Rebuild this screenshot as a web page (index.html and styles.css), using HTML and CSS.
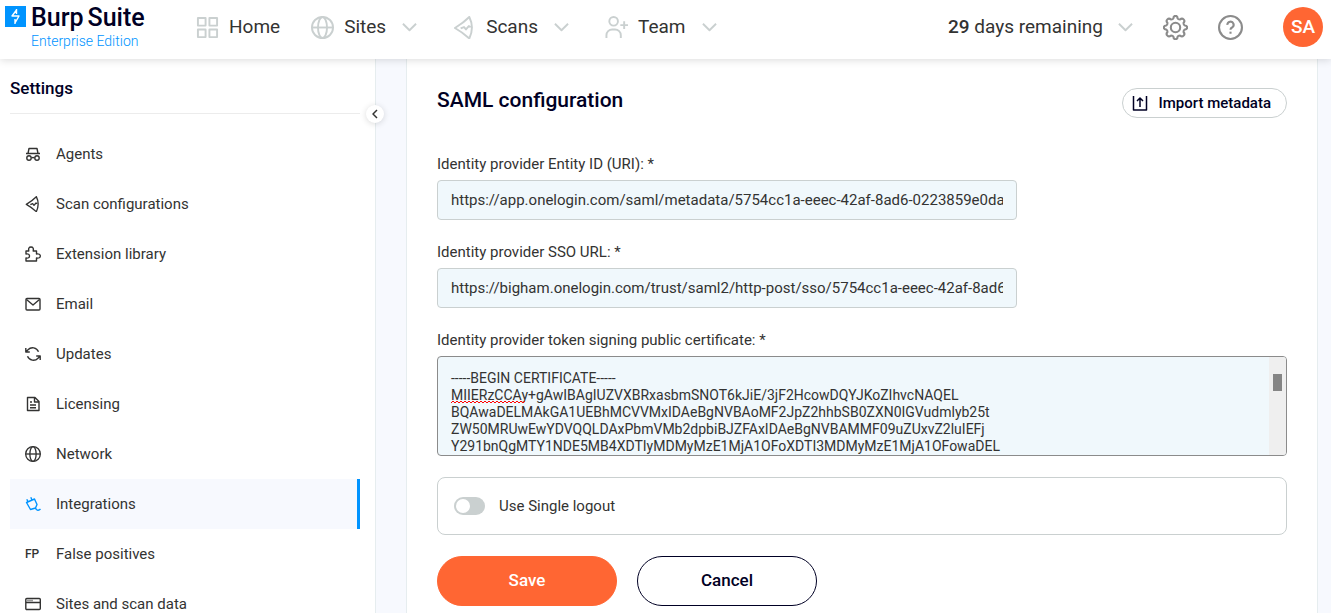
FILE: index.html
```html
<!DOCTYPE html>
<html lang="en">
<head>
    <meta charset="UTF-8">
    <meta name="viewport" content="width=device-width, initial-scale=1.0">
    <title>Settings - Burp Suite Enterprise Edition</title>
    <link rel="stylesheet" href="styles.css">
</head>
<body>
    <!-- shared icon shapes -->
    <svg class="sprite" aria-hidden="true">
        <symbol id="chevron" viewBox="0 0 16 10"><path d="M1 1.5l7 7 7-7"/></symbol>
        <symbol id="globe" viewBox="0 0 24 24"><circle cx="12" cy="12" r="11"/><ellipse cx="12" cy="12" rx="4.7" ry="11"/><path d="M1 12h22"/></symbol>
        <symbol id="scan" viewBox="0 0 24 24"><path d="M17 1Q11 7 2 12.500 10 17 17 23.500Q22.500 12 17 1z"/><path d="M8 13l3.500-1.500L13.500 14l3-3.500 2 1"/></symbol>
    </svg>

    <header class="topbar">
        <a class="logo" href="#">
            <svg class="logo-mark" viewBox="0 0 21 21" aria-hidden="true">
                <rect width="21" height="21" fill="#0094ff"/>
                <path d="M11.500 3v5M11.500 4L7 10h7l-4 7M10 13v5" fill="none" stroke="#fff" stroke-width="1.400"/>
            </svg>
            <span class="logo-name"><span>Burp</span><span>Suite</span></span>
            <span class="logo-edition">Enterprise Edition</span>
        </a>
        <nav class="main-nav">
            <a href="#">
                <svg class="nav-icon" viewBox="0 0 24 24"><path d="M2 2h8v8H2zM14 2h8v8h-8zM2 14h8v8H2zM14 14h8v8h-8z"/></svg>
                Home
            </a>
            <a href="#">
                <svg class="nav-icon"><use href="#globe"/></svg>
                Sites
                <svg class="chevron"><use href="#chevron"/></svg>
            </a>
            <a href="#">
                <svg class="nav-icon"><use href="#scan"/></svg>
                Scans
                <svg class="chevron"><use href="#chevron"/></svg>
            </a>
            <a href="#">
                <svg class="nav-icon" viewBox="0 0 24 24"><circle cx="9" cy="5.500" r="4.500"/><path d="M1.500 23v-3a6 6 0 0 1 6-6h3a6 6 0 0 1 6 6v3M16 9.500h8M20 5.500v8"/></svg>
                Team
                <svg class="chevron"><use href="#chevron"/></svg>
            </a>
        </nav>
        <div class="account">
            <button class="licence" type="button">
                <span><b>29</b> days remaining</span>
                <svg class="chevron"><use href="#chevron"/></svg>
            </button>
            <button class="icon-button" type="button" aria-label="Settings">
                <svg viewBox="0 0 24 24"><circle cx="12" cy="12" r="4.500"/><path d="M10 3.200Q10 .8 12 .8T14 3.200Q14.500 4.300 16.300 4.300Q18.200 2.600 19.800 4.200T19.700 7.700Q19.700 9.400 20.800 10Q23.200 10 23.200 12T20.800 14Q19.700 14.600 19.700 16.300Q21.400 18.200 19.800 19.800T16.300 19.700Q14.500 19.700 14 20.800Q14 23.200 12 23.200T10 20.800Q9.500 19.700 7.700 19.700Q5.800 21.400 4.200 19.800T4.300 16.300Q4.300 14.600 3.200 14Q.8 14 .8 12T3.200 10Q4.300 9.400 4.300 7.700Q2.600 5.800 4.200 4.200T7.700 4.300Q9.500 4.300 10 3.200z"/></svg>
            </button>
            <button class="icon-button" type="button" aria-label="Help">
                <svg viewBox="0 0 24 24"><circle cx="12" cy="12" r="11"/><path d="M9 9.500a3 3 0 1 1 4.500 2.500Q12 12.800 12 14.200"/><path d="M12 16v2"/></svg>
            </button>
            <button class="avatar" type="button">SA</button>
        </div>
    </header>

    <div class="page">
        <div class="sidebar-wrap">
            <aside class="sidebar">
                <h2>Settings</h2>
                <nav class="side-nav">
                    <a href="#">
                        <svg viewBox="0 0 16 16"><path d="M1 7.500h14M3 7.500L4 2.500h8l1 5M6.500 12q1.500-1 3 0"/><circle cx="4" cy="12" r="2.200"/><circle cx="12" cy="12" r="2.200"/></svg>
                        Agents
                    </a>
                    <a href="#">
                        <svg viewBox="0 0 24 24" class="thick"><use href="#scan"/></svg>
                        Scan configurations
                    </a>
                    <a href="#">
                        <svg viewBox="0 0 16 16"><path d="M1 5h2.800Q3 1 6 1t2.200 4H11.500v3Q15.300 7.500 15.300 10t-3.800 2V15H1v-3Q4.500 12.500 4.500 10T1 8z"/></svg>
                        Extension library
                    </a>
                    <a href="#">
                        <svg viewBox="0 0 16 16"><rect x="1" y="2.500" width="14" height="11.500" rx="1"/><path d="M1.500 3.500L8 9l6.500-5.500"/></svg>
                        Email
                    </a>
                    <a href="#">
                        <svg viewBox="0 0 16 16"><path d="M.8 2v4h4M1 5.800l2-2a6.300 6.300 0 0 1 10.500 1.900M15.200 14v-4h-4M15 10.200l-2 2a6.300 6.300 0 0 1-10.500-1.900"/></svg>
                        Updates
                    </a>
                    <a href="#">
                        <svg viewBox="0 0 16 16"><path d="M2.500 1.500H10l4 4v9H2.500zM9.500 1.500V6H14M5 6h2M5 9h6M5 11.800h6"/></svg>
                        Licensing
                    </a>
                    <a href="#">
                        <svg viewBox="0 0 24 24" class="thick"><use href="#globe"/></svg>
                        Network
                    </a>
                    <a href="#" class="active" aria-current="page">
                        <svg viewBox="0 0 16 16"><path d="M1.500 6.500L9.500 3 12 8.500l-1.500 3.500-5 1.500zM3 5.800L1.800 3.200M7 4L5.800 1.200M10.500 12q.8 2.500 2.500 2.300 1.500-.1 2.500-1.300"/></svg>
                        Integrations
                    </a>
                    <a href="#">
                        <span class="fp" aria-hidden="true">FP</span>
                        False positives
                    </a>
                    <a href="#">
                        <svg viewBox="0 0 16 16"><rect x=".8" y="2.500" width="14.500" height="11" rx="1"/><path d="M1 6.500h14M2.500 4.500h1M4.500 4.500h1M6.500 4.500h1"/></svg>
                        Sites and scan data
                    </a>
                </nav>
            </aside>
            <button class="collapse" type="button" aria-label="Collapse sidebar">
                <svg viewBox="0 0 10 10"><path d="M7 1L3 5l4 4"/></svg>
            </button>
        </div>

        <main class="content">
            <form class="card">
                <div class="card-head">
                    <h1>SAML configuration</h1>
                    <button class="import" type="button">
                        <svg viewBox="0 0 16 16"><path d="M1.500 1v14h13V1M8 12V3M5 6l3-3 3 3"/></svg>
                        Import metadata
                    </button>
                </div>

                <label for="entity-id">Identity provider Entity ID (URI): *</label>
                <input class="text-field" id="entity-id" type="text" value="https://app.onelogin.com/saml/metadata/5754cc1a-eeec-42af-8ad6-0223859e0da">

                <label for="sso-url">Identity provider SSO URL: *</label>
                <input class="text-field" id="sso-url" type="text" value="https://bigham.onelogin.com/trust/saml2/http-post/sso/5754cc1a-eeec-42af-8ad6">

                <label for="certificate">Identity provider token signing public certificate: *</label>
                <div class="certificate">
                    <textarea id="certificate" spellcheck="false">-----BEGIN CERTIFICATE-----
MIIERzCCAy+gAwIBAgIUZVXBRxasbmSNOT6kJiE/3jF2HcowDQYJKoZIhvcNAQEL
BQAwaDELMAkGA1UEBhMCVVMxIDAeBgNVBAoMF2JpZ2hhbSB0ZXN0IGVudmlyb25t
ZW50MRUwEwYDVQQLDAxPbmVMb2dpbiBJZFAxIDAeBgNVBAMMF09uZUxvZ2luIEFj
Y291bnQgMTY1NDE5MB4XDTIyMDMyMzE1MjA1OFoXDTI3MDMyMzE1MjA1OFowaDEL</textarea>
                    <svg class="squiggle" viewBox="0 0 78 4" aria-hidden="true"><path d="M0 3l2-2 2 2 2-2 2 2 2-2 2 2 2-2 2 2 2-2 2 2 2-2 2 2 2-2 2 2 2-2 2 2 2-2 2 2 2-2 2 2 2-2 2 2 2-2 2 2 2-2 2 2 2-2 2 2 2-2 2 2 2-2 2 2 2-2 2 2 2-2 2 2 2-2"/></svg>
                    <div class="scrollbar"><span class="thumb"></span></div>
                </div>

                <div class="option">
                    <input class="switch" id="single-logout" type="checkbox" role="switch">
                    <label for="single-logout">Use Single logout</label>
                </div>

                <div class="actions">
                    <button class="btn btn-primary" type="submit">Save</button>
                    <button class="btn" type="button">Cancel</button>
                </div>
            </form>
        </main>
    </div>
</body>
</html>
```
FILE: styles.css
```css
* {
    box-sizing: border-box;
}
body {
    margin: 0;
    height: 100vh;
    display: flex;
    flex-direction: column;
    overflow: hidden;
    font-family: Roboto, "Liberation Sans", Arial, sans-serif;
    font-size: 15px;
    line-height: 20px;
    color: #333332;
    background-color: #f7f9fe;
}
a {
    color: inherit;
    text-decoration: none;
}
button {
    font: inherit;
    color: inherit;
    background: none;
    border: 0;
    padding: 0;
    cursor: pointer;
}
svg {
    display: block;
    flex-shrink: 0;
    fill: none;
    stroke: currentColor;
    stroke-linejoin: round;
}
.sprite {
    position: absolute;
    width: 0;
    height: 0;
}

/* Top bar */
.topbar {
    position: relative;
    z-index: 1;
    flex-shrink: 0;
    display: flex;
    align-items: center;
    height: 59px;
    padding: 0 8px 5px 5px;
    background-color: #fff;
    box-shadow: 0 1px 8px rgba(0, 0, 0, 0.15);
    font-size: 19px;
}
.logo {
    display: grid;
    grid-template-columns: 21px auto;
    column-gap: 5px;
    width: 191px;
    padding-top: 3px;
}
.logo-mark {
    width: 21px;
    height: 21px;
    stroke: none;
}
.logo-name {
    display: flex;
    gap: 4px;
    font-size: 25px;
    font-weight: 500;
    line-height: 24px;
    color: #000024;
}
.logo-edition {
    grid-column: 2;
    font-size: 14px;
    font-weight: 300;
    line-height: 22px;
    color: #0094ff;
}
.main-nav {
    display: flex;
    gap: 31px;
}
.main-nav a {
    display: flex;
    align-items: center;
    gap: 10px;
}
.nav-icon {
    width: 23px;
    height: 23px;
    color: #cad0d0;
    stroke-width: 2;
}
.chevron {
    width: 15px;
    height: 10px;
    margin: 0 5px 0 6px;
    color: #cad0d0;
    stroke-width: 2;
}
.account {
    display: flex;
    align-items: center;
    margin-left: auto;
}
.licence {
    display: flex;
    align-items: center;
    gap: 9px;
}
.licence b {
    font-weight: 500;
}
.icon-button {
    margin-left: 30px;
    color: #8b8b8b;
}
.licence + .icon-button {
    margin-left: 25px;
}
.icon-button svg {
    width: 25px;
    height: 25px;
    stroke-width: 2;
}
.avatar {
    width: 40px;
    height: 40px;
    margin-left: 40px;
    border-radius: 50%;
    background-color: #ff6633;
    color: #fff;
    font-size: 19px;
    font-weight: 500;
}

/* Sidebar */
.page {
    flex: 1;
    min-height: 0;
    display: flex;
}
.sidebar-wrap {
    position: relative;
    flex: 0 0 376px;
    display: flex;
}
.sidebar {
    flex: 1;
    overflow: hidden;
    padding: 0 15px 0 10px;
    background-color: #fff;
    border-right: 1px solid #e6edef;
}
.sidebar h2 {
    margin: 0 0 15px;
    padding: 19px 0 14px;
    border-bottom: 1px solid #ececec;
    font-size: 17px;
    font-weight: 500;
    line-height: 21px;
    color: #000024;
}
.side-nav a {
    display: flex;
    align-items: center;
    gap: 15px;
    height: 50px;
    padding-left: 15px;
}
.side-nav svg {
    width: 16px;
    height: 16px;
    stroke-width: 1.4;
}
.side-nav svg.thick {
    stroke-width: 2;
}
.side-nav .active {
    background-color: #f7f9fe;
    border-right: 3px solid #0094ff;
}
.side-nav .active svg {
    color: #0094ff;
}
.fp {
    width: 16px;
    font-size: 12px;
    font-weight: 500;
}
.collapse {
    position: absolute;
    top: 46px;
    right: -8px;
    display: flex;
    align-items: center;
    justify-content: center;
    width: 18px;
    height: 18px;
    border-radius: 50%;
    background-color: #fff;
    box-shadow: 0 1px 6px rgba(0, 0, 0, 0.15);
}
.collapse svg {
    width: 10px;
    height: 10px;
    stroke-width: 1.5;
}

/* SAML form */
.content {
    flex: 1;
    min-width: 0;
    padding: 0 13px 0 30px;
}
.card {
    height: 100%;
    overflow: hidden;
    padding: 28px 30px 0;
    background-color: #fff;
    border: solid #e6edef;
    border-width: 0 1px;
}
.card-head {
    display: flex;
    align-items: flex-start;
    justify-content: space-between;
    margin-bottom: 36px;
}
.card-head h1 {
    margin: 0;
    font-size: 21px;
    font-weight: 500;
    line-height: 26px;
    color: #000024;
}
.import {
    display: flex;
    align-items: center;
    gap: 11px;
    height: 30px;
    margin-top: 1px;
    padding: 0 15px 0 9px;
    border: 1px solid #cad0d0;
    border-radius: 15px;
    font-weight: 500;
    color: #000024;
}
.import svg {
    width: 16px;
    height: 16px;
    stroke-width: 1.5;
}
.card > label {
    display: block;
    margin-bottom: 6px;
}
.text-field {
    display: block;
    width: 580px;
    max-width: 100%;
    height: 40px;
    margin-bottom: 22px;
    padding: 0 13px;
    border: 1px solid #cad0d0;
    border-radius: 4px;
    background-color: #f0f8fc;
    font: inherit;
    color: inherit;
}
.certificate {
    position: relative;
    display: flex;
    height: 100px;
    margin-bottom: 21px;
    border: 1px solid #8b8b8b;
    border-radius: 4px;
    background-color: #f0f8fc;
    overflow: hidden;
}
.certificate textarea {
    flex: 1;
    min-width: 0;
    padding: 13px 13px 0;
    border: 0;
    background: none;
    overflow: hidden;
    resize: none;
    font: inherit;
    font-size: 14px;
    line-height: 17px;
    color: inherit;
}
.squiggle {
    position: absolute;
    top: 43px;
    left: 13px;
    width: 78px;
    height: 4px;
    color: #f00;
}
.scrollbar {
    width: 17px;
    padding: 17px 4px;
    background-color: #efefef;
}
.thumb {
    display: block;
    height: 17px;
    background-color: #858585;
}
.option {
    display: flex;
    align-items: center;
    gap: 14px;
    height: 58px;
    margin-bottom: 21px;
    padding: 0 16px;
    border: 1px solid #cad0d0;
    border-radius: 8px;
}
.switch {
    appearance: none;
    display: flex;
    width: 31px;
    height: 18px;
    margin: 0;
    padding: 2px;
    border-radius: 9px;
    background-color: #cad0d0;
}
.switch::before {
    content: "";
    width: 14px;
    height: 14px;
    border-radius: 50%;
    background-color: #fff;
}
.switch:checked {
    justify-content: flex-end;
    background-color: #0094ff;
}
.actions {
    display: flex;
    gap: 20px;
}
.btn {
    width: 180px;
    height: 50px;
    padding-bottom: 2px;
    border: 1px solid #000024;
    border-radius: 25px;
    font-size: 17px;
    font-weight: 500;
    color: #000024;
}
.btn-primary {
    border-color: #ff6633;
    background-color: #ff6633;
    color: #fff;
}
```
